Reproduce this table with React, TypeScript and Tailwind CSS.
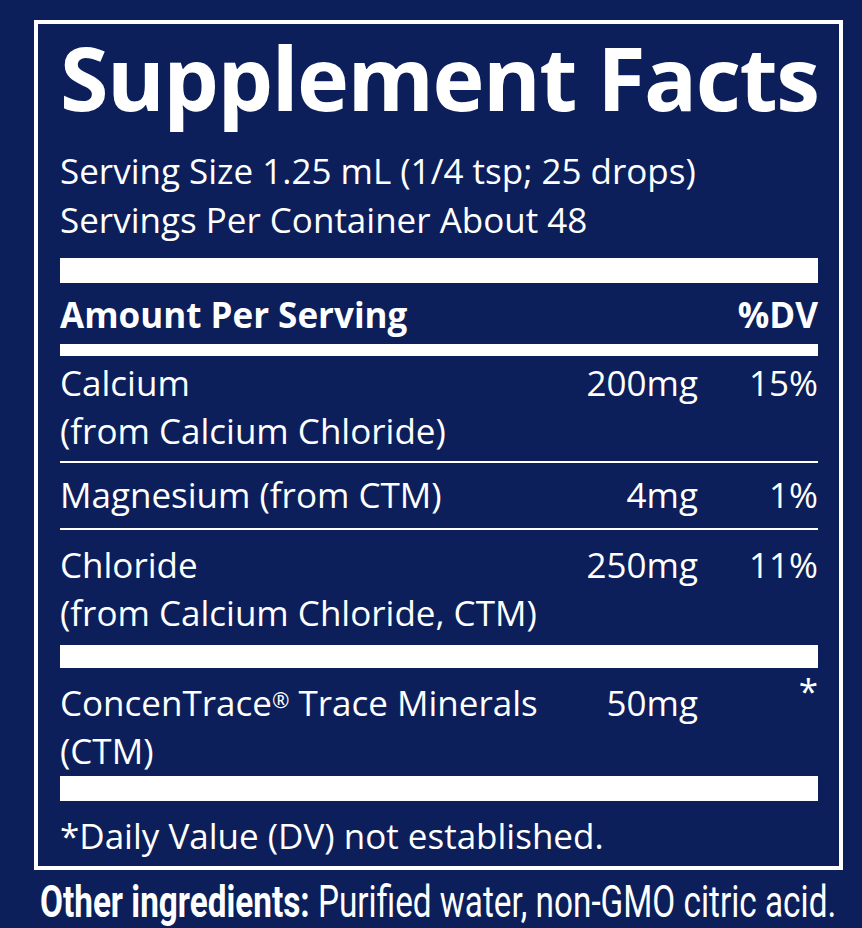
import React from 'react'

type RowProps = {name: React.ReactNode[]; amount: string; dv: React.ReactNode; className: string}

const Row = ({name, amount, dv, className}: RowProps) => (
  <div className={`grid grid-cols-[1fr_150px_120px] leading-[48px] ${className}`}>
    <div>
      {name.map((n, i) => (
        <div key={i}>{n}</div>
      ))}
    </div>
    <div className="text-right">{amount}</div>
    <div className="text-right">{dv}</div>
  </div>
)

export default function App() {
  return (
    <div
      className="w-[862px] h-[928px] bg-[#0c1f5b] text-white pt-[20px] pl-[34px] overflow-hidden"
      style={{fontFamily: '"Open Sans", "Noto Sans", sans-serif'}}
    >
      <div className="w-[809px] border-4 border-white pl-[22px] pr-[21px]">
        <h1 className="text-[88px] font-bold leading-[100px] mt-[3px] tracking-[-1.5px] whitespace-nowrap">
          Supplement Facts
        </h1>
        <div className="text-[35px] leading-[49px] mt-[19px]">
          <div>Serving Size 1.25 mL (1/4 tsp; 25 drops)</div>
          <div>Servings Per Container About 48</div>
        </div>

        <div className="h-[25px] bg-white mt-[14px]" />
        <div className="flex justify-between text-[35px] font-bold leading-[48px] pt-[8px] pb-[5px]">
          <span>Amount Per Serving</span>
          <span>%DV</span>
        </div>
        <div className="h-[12px] bg-white" />

        <div className="text-[35px]">
          <Row name={['Calcium', '(from Calcium Chloride)']} amount="200mg" dv="15%" className="pt-[3px] pb-[6px]" />
          <div className="h-[2px] bg-white" />
          <Row name={['Magnesium (from CTM)']} amount="4mg" dv="1%" className="pt-[8px] pb-[9px]" />
          <div className="h-[2px] bg-white" />
          <Row
            name={['Chloride', '(from Calcium Chloride, CTM)']}
            amount="250mg"
            dv="11%"
            className="pt-[11px] pb-[8px]"
          />
          <div className="h-[23px] bg-white" />
          <Row
            name={[
              <>
                ConcenTrace<sup className="text-[0.6em] relative top-[-0.4em]">®</sup> Trace Minerals
              </>,
              '(CTM)',
            ]}
            amount="50mg"
            dv={<span className="relative top-[-12px]">*</span>}
            className="pt-[11px] pb-[1px]"
          />
          <div className="h-[25px] bg-white" />
        </div>
        <div className="text-[35px] leading-[48px] pt-[11px] pb-[6px]">*Daily Value (DV) not established.</div>
      </div>
      <div
        className="ml-[6px] mt-[4px] text-[45px] leading-[56px] whitespace-nowrap origin-left scale-x-[0.74]"
        style={{fontFamily: 'Roboto, "Liberation Sans", sans-serif'}}
      >
        <span className="font-bold">Other ingredients:</span> Purified water, non-GMO citric acid.
      </div>
    </div>
  )
}
